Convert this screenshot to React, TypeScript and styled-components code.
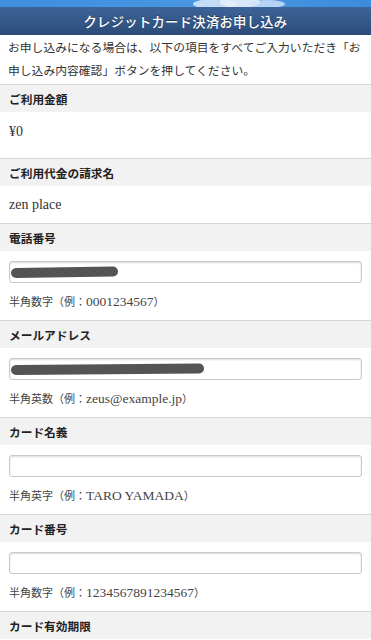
import React from 'react';
import styled, { createGlobalStyle } from 'styled-components';

const GlobalStyle = createGlobalStyle`
	html, body {
		margin: 0;
		padding: 0;
		background: #ffffff;
	}
	body {
		font-family: 'Liberation Serif', 'Noto Sans CJK JP', serif;
		color: #333333;
		-webkit-font-smoothing: antialiased;
	}
`;

const Page = styled.div`
	width: 371px;
	overflow: hidden;
	background: #ffffff;
`;

const Sky = styled.div`
	position: relative;
	height: 7px;
	background: linear-gradient(90deg, #3f8fe0 0%, #4a96e2 60%, #3d8bdc 100%);
	overflow: hidden;
`;

const Cloud = styled.svg`
	position: absolute;
	left: 185px;
	top: -6px;
`;

const TitleBar = styled.h1`
	margin: 0;
	height: 28px;
	display: flex;
	align-items: center;
	justify-content: center;
	background: linear-gradient(180deg, #3d6399 0%, #345888 50%, #2c4b79 100%);
	color: #ffffff;
	font-size: 13.3px;
	font-weight: 500;
	letter-spacing: 0.3px;
	text-shadow: 0 -1px 0 rgba(0, 0, 0, 0.35);
`;

const Intro = styled.p`
	margin: 0;
	padding: 2px 7px 1px 8px;
	font-size: 11.8px;
	line-height: 23px;
	color: #333333;
`;

const Section = styled.section`
	border-top: 1px solid #d6d6d6;
`;

const SectionHead = styled.h2`
	margin: 0;
	height: 27px;
	display: flex;
	align-items: center;
	padding: 0 9px;
	background: #f2f2f2;
	font-size: 11.7px;
	font-weight: 700;
	color: #222222;
`;

const ValueBody = styled.div<{ $top: number; $bottom: number }>`
	padding: ${(p) => p.$top}px 9px ${(p) => p.$bottom}px;
	font-size: 14px;
	line-height: 16px;
	color: #333333;
`;

const FieldBody = styled.div`
	padding: 10px 9px 10px;
`;

const InputWrap = styled.div`
	position: relative;
`;

const TextInput = styled.input`
	display: block;
	box-sizing: border-box;
	width: 100%;
	height: 22px;
	margin: 0;
	padding: 0 6px;
	border: 1px solid #c9c9c9;
	border-radius: 3px;
	background: #ffffff;
	box-shadow: inset 0 1px 2px rgba(0, 0, 0, 0.14);
	font-family: inherit;
	font-size: 12px;
	outline: none;
`;

const Redact = styled.svg`
	position: absolute;
	left: 0;
	top: 0;
	pointer-events: none;
`;

const Hint = styled.div`
	margin-top: 11px;
	font-size: 11px;
	line-height: 16px;
	color: #444444;
`;

const Latin = styled.span`
	font-size: 13.5px;
`;

interface FieldProps {
	label: string;
	hint: [string, string, string];
	redactWidth?: number;
}

const Field = ({ label, hint, redactWidth }: FieldProps) => (
	<Section>
		<SectionHead>{label}</SectionHead>
		<FieldBody>
			<InputWrap>
				<TextInput type='text' />
				{redactWidth ? (
					<Redact width={redactWidth + 12} height={22}>
						<path d={`M7 12 L${redactWidth} 10.5`} stroke='#545454' strokeWidth={10} strokeLinecap='round' fill='none' />
					</Redact>
				) : null}
			</InputWrap>
			<Hint>
				{hint[0]}
				<Latin>{hint[1]}</Latin>
				{hint[2]}
			</Hint>
		</FieldBody>
	</Section>
);

const App = () => (
	<>
		<GlobalStyle />
		<Page>
			<Sky>
				<Cloud width={110} height={14} viewBox='0 0 110 14'>
					<ellipse cx={30} cy={10} rx={22} ry={5} fill='#cfe4f7' opacity={0.9} />
					<ellipse cx={55} cy={8} rx={20} ry={6} fill='#e4f0fb' opacity={0.9} />
					<ellipse cx={82} cy={10} rx={18} ry={4} fill='#cfe4f7' opacity={0.8} />
				</Cloud>
			</Sky>
			<TitleBar>クレジットカード決済お申し込み</TitleBar>
			<Intro>お申し込みになる場合は、以下の項目をすべてご入力いただき「お申し込み内容確認」ボタンを押してください。</Intro>
			<Section>
				<SectionHead>ご利用金額</SectionHead>
				<ValueBody $top={12} $bottom={18}>¥0</ValueBody>
			</Section>
			<Section>
				<SectionHead>ご利用代金の請求名</SectionHead>
				<ValueBody $top={11} $bottom={10}>zen place</ValueBody>
			</Section>
			<Field label='電話番号' hint={['半角数字（例：', '0001234567', '）']} redactWidth={104} />
			<Field label='メールアドレス' hint={['半角英数（例：', 'zeus@example.jp', '）']} redactWidth={190} />
			<Field label='カード名義' hint={['半角英字（例：', 'TARO YAMADA', '）']} />
			<Field label='カード番号' hint={['半角数字（例：', '1234567891234567', '）']} />
			<Section>
				<SectionHead>カード有効期限</SectionHead>
			</Section>
		</Page>
	</>
);

export default App;
